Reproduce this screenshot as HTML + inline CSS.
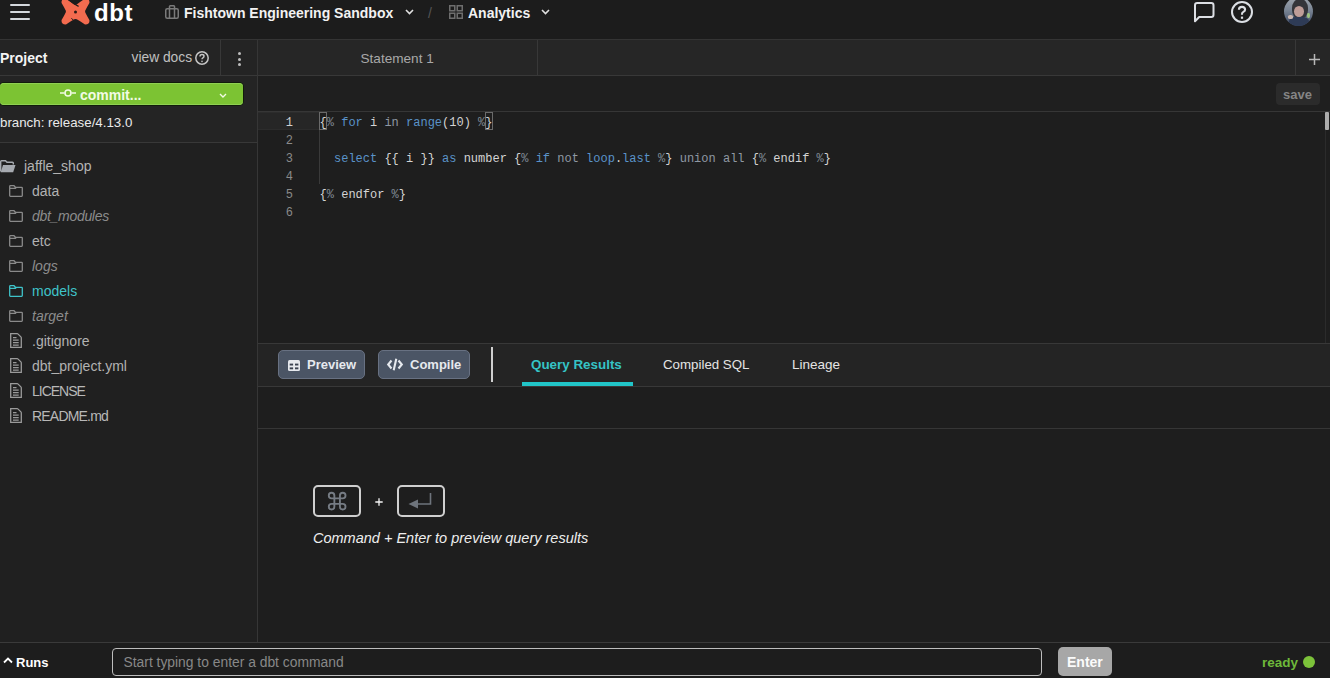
<!DOCTYPE html>
<html><head><meta charset="utf-8">
<style>
*{box-sizing:border-box;margin:0;padding:0}
html,body{width:1330px;height:678px;overflow:hidden;background:#1e1e1e;font-family:"Liberation Sans",sans-serif;color:#ddd}
.a{position:absolute}
.t{position:absolute;white-space:pre;line-height:1}
svg{position:absolute;overflow:visible}
#top{left:0;top:0;width:1330px;height:40px;background:#1c1c1c;border-bottom:1px solid #343434}
#side{left:0;top:40px;width:258px;height:602px;background:#202020;border-right:1px solid #363636}
.row{position:absolute;left:0;height:25px;width:257px}
.code{position:absolute;font-family:"Liberation Mono",monospace;font-size:12px;line-height:18px;white-space:pre;color:#d4d4d4}
.ln{position:absolute;font-family:"Liberation Mono",monospace;font-size:12px;line-height:18px;color:#8a8a8a;text-align:right;width:40px;left:253px}
.kw{color:#5a93c9}
.op{color:#7f8994}
.gr{color:#8f98a3}
</style></head><body>

<!-- TOP BAR -->
<div id="top" class="a">
  <!-- hamburger -->
  <div class="a" style="left:10px;top:4px;width:20px;height:2px;background:#d4d8dc;border-radius:1px"></div>
  <div class="a" style="left:10px;top:11px;width:20px;height:2px;background:#d4d8dc;border-radius:1px"></div>
  <div class="a" style="left:10px;top:18px;width:20px;height:2px;background:#d4d8dc;border-radius:1px"></div>
  <!-- dbt logo -->
  <svg style="left:61px;top:-2px" width="29" height="27" viewBox="0 0 29 27">
    <path d="M0.6 5 Q3 9 4.6 12.3 Q5.2 13.5 4.6 14.7 Q3 18 0.6 22 Q0 26.6 5 26.4 Q10 23 13.3 21.3 Q14.5 20.7 15.7 21.3 Q19 23 24 26.4 Q29 26.6 28.4 22 Q26 18 24.4 14.7 Q23.8 13.5 24.4 12.3 Q26 9 28.4 5 Q29 0.4 24 0.6 Q19 4 15.7 6.4 Q14.5 7 13.3 6.4 Q10 4 5 0.6 Q0 0.4 0.6 5Z" fill="#f36b4f"/>
    <circle cx="14.5" cy="14" r="1.5" fill="#2a1a16"/>
    <path d="M7.2 1.6 Q12 5.6 17.6 8.4" fill="none" stroke="#1c1c1c" stroke-width="1.2"/>
    <path d="M10.4 20.2 L13 22.8" stroke="#1c1c1c" stroke-width="1"/>
  </svg>
  <div class="t" style="left:94px;top:1px;font-size:24px;font-weight:bold;color:#fff;letter-spacing:0.6px">dbt</div>
  <!-- briefcase -->
  <svg style="left:165px;top:5px" width="14" height="14" viewBox="0 0 14 14">
    <rect x="0.75" y="3.75" width="12.5" height="9.5" rx="1.5" fill="none" stroke="#7a7a7a" stroke-width="1.5"/>
    <path d="M4.5 3.5V1.5Q4.5 0.75 5.25 0.75H8.75Q9.5 0.75 9.5 1.5V3.5M4.5 4v9M9.5 4v9" fill="none" stroke="#7a7a7a" stroke-width="1.5"/>
  </svg>
  <div class="t" style="left:184px;top:6px;font-size:14px;font-weight:bold;color:#f2f2f2">Fishtown Engineering Sandbox</div>
  <svg style="left:405px;top:9px" width="9" height="6" viewBox="0 0 9 6"><path d="M1 1l3.5 3.5L8 1" fill="none" stroke="#e0e0e0" stroke-width="1.6"/></svg>
  <div class="t" style="left:428px;top:6px;font-size:14px;color:#555">/</div>
  <!-- grid icon -->
  <svg style="left:449px;top:5px" width="14" height="14" viewBox="0 0 14 14">
    <rect x="0.75" y="0.75" width="5" height="5" fill="none" stroke="#6e6e6e" stroke-width="1.5"/>
    <rect x="8.25" y="0.75" width="5" height="5" fill="none" stroke="#6e6e6e" stroke-width="1.5"/>
    <rect x="0.75" y="8.25" width="5" height="5" fill="none" stroke="#6e6e6e" stroke-width="1.5"/>
    <rect x="8.25" y="8.25" width="5" height="5" fill="none" stroke="#6e6e6e" stroke-width="1.5"/>
  </svg>
  <div class="t" style="left:468px;top:6px;font-size:14px;font-weight:bold;color:#f2f2f2">Analytics</div>
  <svg style="left:541px;top:9px" width="9" height="6" viewBox="0 0 9 6"><path d="M1 1l3.5 3.5L8 1" fill="none" stroke="#e0e0e0" stroke-width="1.6"/></svg>
  <!-- chat -->
  <svg style="left:1194px;top:2px" width="21" height="21" viewBox="0 0 21 21">
    <path d="M1 19.3V3.2Q1 1 3.2 1H17.3Q19.5 1 19.5 3.2V12.8Q19.5 15 17.3 15H5.2Z" fill="none" stroke="#dcdfe4" stroke-width="2" stroke-linejoin="round"/>
  </svg>
  <!-- help -->
  <svg style="left:1231px;top:1px" width="22" height="22" viewBox="0 0 22 22">
    <circle cx="11" cy="11" r="10" fill="none" stroke="#dcdfe4" stroke-width="2"/>
    <path d="M7.9 8.7Q7.9 5.9 11 5.9Q14.1 5.9 14.1 8.5Q14.1 10.1 12.4 10.9Q11 11.6 11 13V13.7" fill="none" stroke="#dcdfe4" stroke-width="2.1"/>
    <rect x="9.9" y="15.6" width="2.2" height="2.2" fill="#dcdfe4"/>
  </svg>
  <!-- avatar -->
  <div class="a" style="left:1284px;top:-3px;width:29px;height:29px;border-radius:50%;background:linear-gradient(180deg,#a0a6ae 0%,#7a8594 45%,#3c4862 100%);overflow:hidden">
    <div class="a" style="left:8px;top:2px;width:16px;height:20px;border-radius:45%;background:#34353a"></div>
    <div class="a" style="left:9.5px;top:9px;width:10px;height:11px;border-radius:50%;background:#bf9d98"></div>
    <div class="a" style="left:5px;top:20px;width:20px;height:12px;border-radius:35%;background:#2e3b56"></div>
    <div class="a" style="left:4px;top:18px;width:5px;height:4px;border-radius:40%;background:#c9b6b0"></div>
    <div class="a" style="left:23px;top:16px;width:3px;height:5px;border-radius:40%;background:#9cc27e"></div>
  </div>
</div>

<!-- SIDEBAR -->
<div id="side" class="a">
  <div class="a" style="left:0;top:0;width:257px;height:102px;background:#242424"></div>
  <div class="a" style="left:0;top:35px;width:257px;height:1px;background:#383838"></div>
  <div class="a" style="left:220px;top:0;width:1px;height:35px;background:#383838"></div>
  <div class="t" style="left:0;top:11px;font-size:14px;font-weight:bold;color:#f4f4f4">Project</div>
  <div class="t" style="left:131.5px;top:10.5px;font-size:13.8px;color:#c0c0c0">view docs</div>
  <svg style="left:195px;top:11px" width="14" height="14" viewBox="0 0 14 14">
    <circle cx="7" cy="7" r="6.2" fill="none" stroke="#c4c4c4" stroke-width="1.5"/>
    <path d="M5 5.4Q5 3.6 7 3.6Q9 3.6 9 5.2Q9 6.2 7.9 6.8Q7 7.3 7 8.3" fill="none" stroke="#c4c4c4" stroke-width="1.5"/>
    <circle cx="7" cy="10.4" r="0.8" fill="#c4c4c4"/>
  </svg>
  <div class="a" style="left:237.5px;top:12.3px;width:3px;height:3px;border-radius:50%;background:#bdbdbd"></div>
  <div class="a" style="left:237.5px;top:17.7px;width:3px;height:3px;border-radius:50%;background:#bdbdbd"></div>
  <div class="a" style="left:237.5px;top:23px;width:3px;height:3px;border-radius:50%;background:#bdbdbd"></div>
  <!-- commit button -->
  <div class="a" style="left:0;top:43px;width:243px;height:22px;background:#7cc333;border-radius:4px;box-shadow:0 0 0 1px rgba(10,25,0,.7),inset 0 1px 0 #8fd052,inset 0 -1px 0 #8fd052"></div>
  <svg style="left:60px;top:49px" width="16" height="8" viewBox="0 0 16 8">
    <path d="M0 4H4.5M11.5 4H16" stroke="#f2fbe4" stroke-width="1.6"/>
    <circle cx="8" cy="4" r="3" fill="none" stroke="#f2fbe4" stroke-width="1.6"/>
  </svg>
  <div class="t" style="left:80px;top:48px;font-size:14px;font-weight:bold;color:#f2fbe4">commit...</div>
  <svg style="left:219px;top:53px" width="8" height="5" viewBox="0 0 8 5"><path d="M1 1l3 3 3-3" fill="none" stroke="#f2fbe4" stroke-width="1.4"/></svg>
  <div class="t" style="left:0;top:76px;font-size:13.3px;color:#eaeaea">branch: release/4.13.0</div>
  <div class="a" style="left:0;top:102px;width:257px;height:1px;background:#383838"></div>
</div>

<!-- TREE -->
<div id="tree">
  <!-- jaffle_shop open folder -->
  <svg style="left:0;top:160px" width="16" height="13" viewBox="0 0 16 13">
    <path d="M0.7 11.5V1.5Q0.7 0.7 1.5 0.7H5.5L7 2.3H12.5Q13.3 2.3 13.3 3.1V4.5" fill="none" stroke="#a6aab0" stroke-width="1.4"/>
    <path d="M0.7 12.3L3 5H15.5L13.2 12.3Z" fill="#a6aab0"/>
  </svg>
  <div class="t" style="left:24px;top:159px;font-size:14px;color:#b4b4b4">jaffle_shop</div>
  <svg style="left:9px;top:185px" width="14" height="12" viewBox="0 0 14 12"><path d="M0.7 10.6V1.4Q0.7 0.7 1.4 0.7H5L6.4 2.3H12.6Q13.3 2.3 13.3 3V10.6Q13.3 11.3 12.6 11.3H1.4Q0.7 11.3 0.7 10.6Z M0.7 3.4H6.4L7.4 2.3" fill="none" stroke="#8a8a8a" stroke-width="1.3"/></svg>
  <div class="t" style="left:32px;top:184px;font-size:14px;color:#b2b2b2">data</div>
  <svg style="left:9px;top:210px" width="14" height="12" viewBox="0 0 14 12"><path d="M0.7 10.6V1.4Q0.7 0.7 1.4 0.7H5L6.4 2.3H12.6Q13.3 2.3 13.3 3V10.6Q13.3 11.3 12.6 11.3H1.4Q0.7 11.3 0.7 10.6Z M0.7 3.4H6.4L7.4 2.3" fill="none" stroke="#8a8a8a" stroke-width="1.3"/></svg>
  <div class="t" style="left:32px;top:209px;font-size:14px;font-style:italic;color:#8c8c8c;letter-spacing:-0.3px">dbt_modules</div>
  <svg style="left:9px;top:235px" width="14" height="12" viewBox="0 0 14 12"><path d="M0.7 10.6V1.4Q0.7 0.7 1.4 0.7H5L6.4 2.3H12.6Q13.3 2.3 13.3 3V10.6Q13.3 11.3 12.6 11.3H1.4Q0.7 11.3 0.7 10.6Z M0.7 3.4H6.4L7.4 2.3" fill="none" stroke="#8a8a8a" stroke-width="1.3"/></svg>
  <div class="t" style="left:32px;top:234px;font-size:14px;color:#b2b2b2">etc</div>
  <svg style="left:9px;top:260px" width="14" height="12" viewBox="0 0 14 12"><path d="M0.7 10.6V1.4Q0.7 0.7 1.4 0.7H5L6.4 2.3H12.6Q13.3 2.3 13.3 3V10.6Q13.3 11.3 12.6 11.3H1.4Q0.7 11.3 0.7 10.6Z M0.7 3.4H6.4L7.4 2.3" fill="none" stroke="#8a8a8a" stroke-width="1.3"/></svg>
  <div class="t" style="left:32px;top:259px;font-size:14px;font-style:italic;color:#8c8c8c">logs</div>
  <svg style="left:9px;top:285px" width="14" height="12" viewBox="0 0 14 12"><path d="M0.7 10.6V1.4Q0.7 0.7 1.4 0.7H5L6.4 2.3H12.6Q13.3 2.3 13.3 3V10.6Q13.3 11.3 12.6 11.3H1.4Q0.7 11.3 0.7 10.6Z M0.7 3.4H6.4L7.4 2.3" fill="none" stroke="#3fc3c9" stroke-width="1.3"/></svg>
  <div class="t" style="left:32px;top:284px;font-size:14px;color:#3fc3c9">models</div>
  <svg style="left:9px;top:310px" width="14" height="12" viewBox="0 0 14 12"><path d="M0.7 10.6V1.4Q0.7 0.7 1.4 0.7H5L6.4 2.3H12.6Q13.3 2.3 13.3 3V10.6Q13.3 11.3 12.6 11.3H1.4Q0.7 11.3 0.7 10.6Z M0.7 3.4H6.4L7.4 2.3" fill="none" stroke="#8a8a8a" stroke-width="1.3"/></svg>
  <div class="t" style="left:32px;top:309px;font-size:14px;font-style:italic;color:#8c8c8c">target</div>
  <svg style="left:10px;top:333px" width="12" height="15" viewBox="0 0 12 15"><path d="M0.7 0.7H7.2Q7.7 0.7 8.1 1.1L10.9 3.9Q11.3 4.3 11.3 4.8V14.3H0.7Z M3 4.6H6.5M3 7.1H8.7M3 9.6H8.7M3 12.1H8.7" fill="none" stroke="#9a9a9a" stroke-width="1.3"/></svg>
  <div class="t" style="left:32px;top:334px;font-size:14px;color:#b2b2b2">.gitignore</div>
  <svg style="left:10px;top:358px" width="12" height="15" viewBox="0 0 12 15"><path d="M0.7 0.7H7.2Q7.7 0.7 8.1 1.1L10.9 3.9Q11.3 4.3 11.3 4.8V14.3H0.7Z M3 4.6H6.5M3 7.1H8.7M3 9.6H8.7M3 12.1H8.7" fill="none" stroke="#9a9a9a" stroke-width="1.3"/></svg>
  <div class="t" style="left:32px;top:359px;font-size:14px;color:#b2b2b2">dbt_project.yml</div>
  <svg style="left:10px;top:383px" width="12" height="15" viewBox="0 0 12 15"><path d="M0.7 0.7H7.2Q7.7 0.7 8.1 1.1L10.9 3.9Q11.3 4.3 11.3 4.8V14.3H0.7Z M3 4.6H6.5M3 7.1H8.7M3 9.6H8.7M3 12.1H8.7" fill="none" stroke="#9a9a9a" stroke-width="1.3"/></svg>
  <div class="t" style="left:32px;top:384px;font-size:14px;color:#b8b8b8;letter-spacing:-1px">LICENSE</div>
  <svg style="left:10px;top:408px" width="12" height="15" viewBox="0 0 12 15"><path d="M0.7 0.7H7.2Q7.7 0.7 8.1 1.1L10.9 3.9Q11.3 4.3 11.3 4.8V14.3H0.7Z M3 4.6H6.5M3 7.1H8.7M3 9.6H8.7M3 12.1H8.7" fill="none" stroke="#9a9a9a" stroke-width="1.3"/></svg>
  <div class="t" style="left:32px;top:409px;font-size:14px;color:#b8b8b8;letter-spacing:-0.8px">README.md</div>
</div>

<!-- MAIN TAB BAR -->
<div class="a" style="left:258px;top:40px;width:1072px;height:36px;background:#262626;border-bottom:1px solid #383838"></div>
<div class="a" style="left:537px;top:40px;width:1px;height:35px;background:#383838"></div>
<div class="a" style="left:1295px;top:40px;width:1px;height:35px;background:#383838"></div>
<div class="t" style="left:360.5px;top:52px;font-size:13.6px;color:#a8a8a8">Statement 1</div>
<svg style="left:1308.5px;top:53.5px" width="11" height="11" viewBox="0 0 11 11"><path d="M5.5 0V11M0 5.5H11" stroke="#b8b8b8" stroke-width="1.5"/></svg>

<!-- TOOLBAR -->
<div class="a" style="left:258px;top:76px;width:1072px;height:36px;background:#1f1f1f;border-bottom:1px solid #363636"></div>
<div class="a" style="left:1276px;top:83px;width:44px;height:22px;background:#2b2b2b;border-radius:4px"></div>
<div class="t" style="left:1283px;top:88px;font-size:13px;font-weight:bold;color:#858585">save</div>

<!-- EDITOR -->
<div class="a" style="left:258px;top:112px;width:1072px;height:231px;background:#1e1e1e"></div>
<div class="a" style="left:258px;top:112px;width:61px;height:18px;background:#262626;border-top:1px solid #2c2c2c;border-bottom:1px solid #2c2c2c"></div>
<div class="a" style="left:1325px;top:112px;width:1px;height:231px;background:#2b2b2b"></div>
<div class="a" style="left:1325px;top:112px;width:4px;height:18px;background:#acacac;border-radius:1px"></div>
<div class="a" style="left:319px;top:130px;width:1px;height:54px;background:#3a3a3a"></div>
<div class="ln" style="top:114px;color:#d0d0d0">1</div>
<div class="ln" style="top:132px">2</div>
<div class="ln" style="top:150px">3</div>
<div class="ln" style="top:168px">4</div>
<div class="ln" style="top:186px">5</div>
<div class="ln" style="top:204px">6</div>
<div class="a" style="left:319px;top:112px;width:8px;height:18px;border:1px solid #6a6a6a"></div>
<div class="a" style="left:485px;top:112px;width:8px;height:18px;border:1px solid #6a6a6a"></div>
<div class="code" style="left:319.6px;top:114px">{<span class="op">%</span> <span class="kw">for</span> i <span class="gr">in</span> <span class="kw">range</span>(10) <span class="op">%</span>}</div>
<div class="code" style="left:319.6px;top:150px">  <span class="kw">select</span> {{ i }} <span class="kw">as</span> number {<span class="op">%</span> <span class="kw">if</span> <span class="gr">not</span> <span class="kw">loop</span>.<span class="kw">last</span> <span class="op">%</span>} <span class="gr">union all</span> {<span class="op">%</span> endif <span class="op">%</span>}</div>
<div class="code" style="left:319.6px;top:186px">{<span class="op">%</span> endfor <span class="op">%</span>}</div>

<!-- RESULTS BAR -->
<div class="a" style="left:258px;top:343px;width:1072px;height:44px;background:#242424;border-top:1px solid #383838;border-bottom:1px solid #383838"></div>
<div class="a" style="left:278px;top:350px;width:87px;height:29px;background:#4b5565;border:1px solid #687182;border-radius:5px"></div>
<svg style="left:288px;top:359.5px" width="12" height="11" viewBox="0 0 12 11">
  <rect x="0" y="0" width="12" height="11" rx="1.5" fill="#e6e9ee"/>
  <rect x="1.7" y="3.6" width="3.4" height="1.9" fill="#3a4250"/><rect x="7" y="3.6" width="3.4" height="1.9" fill="#3a4250"/>
  <rect x="1.7" y="7.4" width="3.4" height="1.9" fill="#3a4250"/><rect x="7" y="7.4" width="3.4" height="1.9" fill="#3a4250"/>
</svg>
<div class="t" style="left:307px;top:358px;font-size:13px;font-weight:bold;color:#e6e9ee">Preview</div>
<div class="a" style="left:378px;top:350px;width:92px;height:29px;background:#4b5565;border:1px solid #687182;border-radius:5px"></div>
<svg style="left:387px;top:358px" width="16" height="13" viewBox="0 0 16 13">
  <path d="M4.5 2.5L1.2 6.5L4.5 10.5M11.5 2.5L14.8 6.5L11.5 10.5M9.3 0.8L6.7 12.2" fill="none" stroke="#e6e9ee" stroke-width="2.1"/>
</svg>
<div class="t" style="left:410px;top:358px;font-size:13px;font-weight:bold;color:#e6e9ee">Compile</div>
<div class="a" style="left:491px;top:347px;width:2px;height:35px;background:#cfcfcf"></div>
<div class="t" style="left:531px;top:358px;font-size:13.4px;font-weight:bold;color:#35c3c6">Query Results</div>
<div class="a" style="left:522px;top:382px;width:111px;height:4px;background:#21c5c8"></div>
<div class="t" style="left:663px;top:358px;font-size:13.3px;color:#e4e4e4">Compiled SQL</div>
<div class="t" style="left:792px;top:358px;font-size:13.5px;color:#e4e4e4">Lineage</div>

<!-- RESULTS BODY -->
<div class="a" style="left:258px;top:387px;width:1072px;height:42px;background:#1e1e1e;border-bottom:1px solid #363636"></div>
<div class="a" style="left:313px;top:485px;width:48px;height:32px;border:2px solid #cfcfcf;border-radius:5px"></div>
<svg style="left:325.6px;top:490.3px" width="22.3" height="22.3" viewBox="0 0 24 24"><path d="M15 6v12a3 3 0 1 0 3-3H6a3 3 0 1 0 3 3V6a3 3 0 1 0-3 3h12a3 3 0 1 0-3-3" fill="none" stroke="#767c84" stroke-width="2"/></svg>
<svg style="left:375px;top:498px" width="8" height="8" viewBox="0 0 8 8"><path d="M4 0.3V7.7M0.3 4H7.7" stroke="#f4f4f4" stroke-width="1.3"/></svg>
<div class="a" style="left:397px;top:485px;width:48px;height:32px;border:2px solid #cfcfcf;border-radius:5px"></div>
<svg style="left:408px;top:492px" width="24" height="17" viewBox="0 0 24 17">
  <path d="M22.5 1V12H9" fill="none" stroke="#6e747c" stroke-width="1.6"/>
  <path d="M0.5 12L10 7.5V16.5Z" fill="#6e747c"/>
</svg>
<div class="t" style="left:313px;top:531px;font-size:14.5px;font-style:italic;color:#eeeeee">Command + Enter to preview query results</div>

<!-- BOTTOM BAR -->
<div class="a" style="left:0;top:642px;width:1330px;height:36px;background:#1d1d1d;border-top:1px solid #3a3a3a"></div>
<svg style="left:3px;top:657px" width="10" height="6" viewBox="0 0 10 6"><path d="M1 5.5L5 1.5L9 5.5" fill="none" stroke="#fff" stroke-width="1.8"/></svg>
<div class="t" style="left:16px;top:656px;font-size:13px;font-weight:bold;color:#fff">Runs</div>
<div class="a" style="left:112px;top:648px;width:930px;height:28px;border:1.5px solid #bdbdbd;border-radius:4px"></div>
<div class="t" style="left:123.5px;top:655.5px;font-size:13.85px;color:#888">Start typing to enter a dbt command</div>
<div class="a" style="left:1058px;top:647px;width:54px;height:29px;background:#a7a7a7;border-radius:5px"></div>
<div class="t" style="left:1067px;top:655px;font-size:14px;font-weight:bold;color:#fbfbfb">Enter</div>
<div class="t" style="left:1262px;top:656px;font-size:13.5px;font-weight:bold;color:#6eb83a">ready</div>
<div class="a" style="left:1303px;top:656px;width:12px;height:12px;border-radius:50%;background:#7cc23a"></div>

</body></html>
